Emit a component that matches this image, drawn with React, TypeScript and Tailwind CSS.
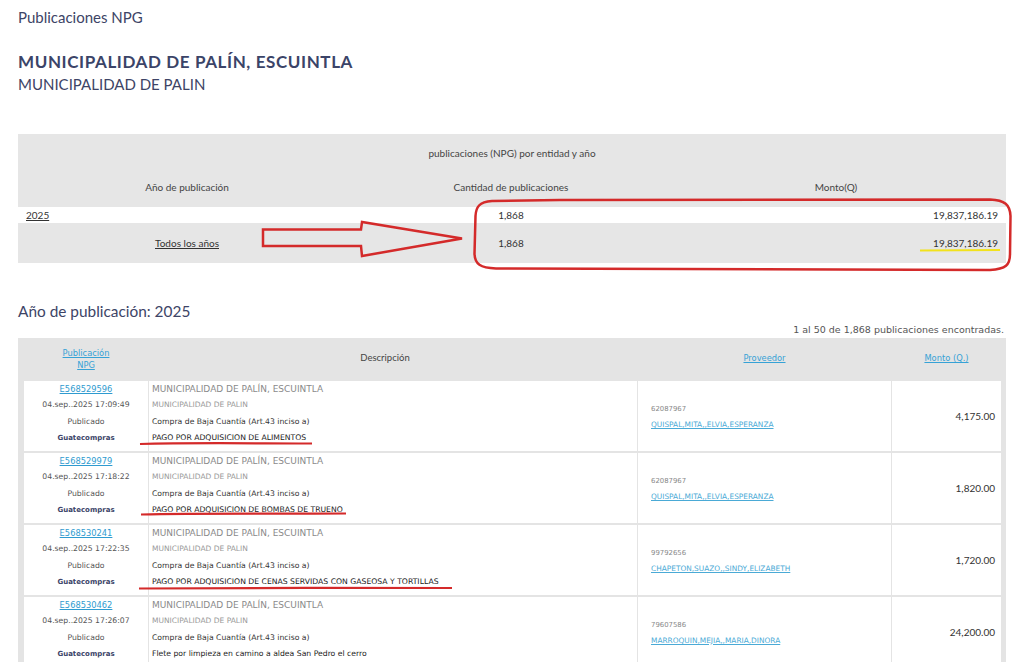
const rows = [
  {
    id: "E568529596",
    date: "04.sep..2025 17:09:49",
    desc: "PAGO POR ADQUISICION DE ALIMENTOS",
    nit: "62087967",
    prov: "QUISPAL,MITA,,ELVIA,ESPERANZA",
    monto: "4,175.00",
  },
  {
    id: "E568529979",
    date: "04.sep..2025 17:18:22",
    desc: "PAGO POR ADQUISICION DE BOMBAS DE TRUENO",
    nit: "62087967",
    prov: "QUISPAL,MITA,,ELVIA,ESPERANZA",
    monto: "1,820.00",
  },
  {
    id: "E568530241",
    date: "04.sep..2025 17:22:35",
    desc: "PAGO POR ADQUISICION DE CENAS SERVIDAS CON GASEOSA Y TORTILLAS",
    nit: "99792656",
    prov: "CHAPETON,SUAZO,,SINDY,ELIZABETH",
    monto: "1,720.00",
  },
  {
    id: "E568530462",
    date: "04.sep..2025 17:26:07",
    desc: "Flete por limpieza en camino a aldea San Pedro el cerro",
    nit: "79607586",
    prov: "MARROQUIN,MEJIA,,MARIA,DINORA",
    monto: "24,200.00",
  },
];

const lato = "font-['Lato','Open_Sans',sans-serif]";
const verdana = "font-['DejaVu_Sans','Verdana',sans-serif]";

function SummaryTable() {
  return (
    <div className={`mt-[40px] bg-[#e6e6e6] text-[10px] text-[#444] ${lato}`}>
      <div className="flex h-[38px] items-center justify-center">
        publicaciones (NPG) por entidad y año
      </div>
      <div className="grid h-[35px] grid-cols-[338px_310px_1fr] pt-[8px] leading-[14px]">
        <div className="text-center">Año de publicación</div>
        <div className="text-center">Cantidad de publicaciones</div>
        <div className="text-center">Monto(Q)</div>
      </div>
      <div className="grid h-[16px] grid-cols-[338px_310px_1fr] items-center bg-white text-[#333]">
        <div className="pl-[8px] underline">2025</div>
        <div className="text-center">1,868</div>
        <div className="pr-[8px] text-right">19,837,186.19</div>
      </div>
      <div className="grid h-[40px] grid-cols-[338px_310px_1fr] items-center text-[#333]">
        <div className="text-center underline">Todos los años</div>
        <div className="text-center">1,868</div>
        <div className="pr-[8px] text-right">19,837,186.19</div>
      </div>
    </div>
  );
}

function DetailTable() {
  return (
    <div className={`mt-[1px] bg-[#e4e4e4] pb-[2px] pl-[6px] pr-[5px] ${verdana}`}>
      <div className="grid grid-cols-[124px_488px_253px_1fr] gap-x-[1px] gap-y-[2px]">
        <div className="flex h-[41px] flex-col items-center justify-center text-[8.3px] leading-[12px] text-[#36a2d6] underline">
          <span>Publicación</span>
          <span>NPG</span>
        </div>
        <div className={`flex items-center justify-center pr-[16px] text-[9.5px] text-[#444] ${lato}`}>
          Descripción
        </div>
        <div className="flex items-center justify-center text-[8.3px] text-[#36a2d6] underline">
          Proveedor
        </div>
        <div className="flex items-center justify-center text-[8.3px] text-[#36a2d6] underline">
          Monto (Q.)
        </div>

        {rows.map((r) => (
          <Row key={r.id} r={r} />
        ))}
      </div>
    </div>
  );
}

function Row({ r }: { r: (typeof rows)[number] }) {
  return (
    <>
      <div className="flex h-[70px] flex-col items-center bg-white leading-[16.3px]">
        <span className="text-[8.3px] text-[#2f9bd0] underline">{r.id}</span>
        <span className="text-[7.7px] text-[#555]">{r.date}</span>
        <span className="text-[7.7px] text-[#555]">Publicado</span>
        <span className="text-[7px] font-bold text-[#3b4468]">Guatecompras</span>
      </div>
      <div className="flex h-[70px] flex-col bg-white pl-[3px] leading-[16.3px]">
        <span className="text-[9px] text-[#8a8a8a]">MUNICIPALIDAD DE PALÍN, ESCUINTLA</span>
        <span className="text-[7.5px] text-[#999]">MUNICIPALIDAD DE PALIN</span>
        <span className="text-[7.7px] text-[#333]">Compra de Baja Cuantía (Art.43 inciso a)</span>
        <span className="text-[7.7px] text-[#222]">{r.desc}</span>
      </div>
      <div className="flex h-[70px] flex-col justify-center bg-white pl-[13px] pt-[1px] leading-[16px]">
        <span className="text-[6.9px] text-[#888]">{r.nit}</span>
        <span className="text-[7.4px] text-[#4aaad6] underline">{r.prov}</span>
      </div>
      <div className={`flex h-[70px] items-center justify-end bg-white pr-[6px] text-[10px] text-[#333] ${lato}`}>
        {r.monto}
      </div>
    </>
  );
}

function Annotations() {
  return (
    <svg
      className="pointer-events-none absolute left-0 top-0"
      width={1024}
      height={700}
      viewBox="0 0 1024 700"
      fill="none"
    >
      <path
        d="M263 229.5 L361 229.5 L362 222 L462 238.5 L362 256 L361 246 L263 246 Z"
        stroke="#d42a2a"
        strokeWidth={2.5}
        strokeLinejoin="miter"
      />
      <path
        d="M492 201 C479 202 476 207 475.5 216 L474.5 254 C475 264 480 268 496 268.5 L990 270 C1006 269 1010 265 1010 254 L1010.5 216 C1010 205 1005 200 990 199.5 L560 200 Z"
        stroke="#d42a2a"
        strokeWidth={2.5}
      />
      <path d="M920 250.5 L1000 250" stroke="#f2e21c" strokeWidth={2} />
      <path d="M140 444 C190 442.5 260 443.5 312 443.5" stroke="#d42a2a" strokeWidth={2.2} />
      <path d="M141 514.5 C200 513 280 514 346 513.5" stroke="#d42a2a" strokeWidth={2.2} />
      <path d="M139 588.5 C240 587.5 350 588 452 588" stroke="#d42a2a" strokeWidth={2.2} />
    </svg>
  );
}

export default function App() {
  return (
    <div className="relative min-h-[700px] w-full bg-white px-[18px] pt-[6px]">
      <div className={lato}>
        <h1 className="text-[15px] leading-[22px] text-[#3d4466]">Publicaciones NPG</h1>
        <h2 className="mt-[24px] text-[17px] font-bold leading-[20px] tracking-[0.6px] text-[#3b4468]">
          MUNICIPALIDAD DE PALÍN, ESCUINTLA
        </h2>
        <p className="mt-[2px] text-[15px] leading-[20px] text-[#3d4466]">MUNICIPALIDAD DE PALIN</p>
      </div>

      <SummaryTable />

      <h3 className={`mt-[37px] text-[15.4px] leading-[22px] text-[#3d4466] ${lato}`}>
        Año de publicación: 2025
      </h3>
      <p className={`mt-[1px] pr-[2px] text-right text-[9.5px] leading-[14px] text-[#555] ${verdana}`}>
        1 al 50 de 1,868 publicaciones encontradas.
      </p>

      <DetailTable />

      <Annotations />
    </div>
  );
}
